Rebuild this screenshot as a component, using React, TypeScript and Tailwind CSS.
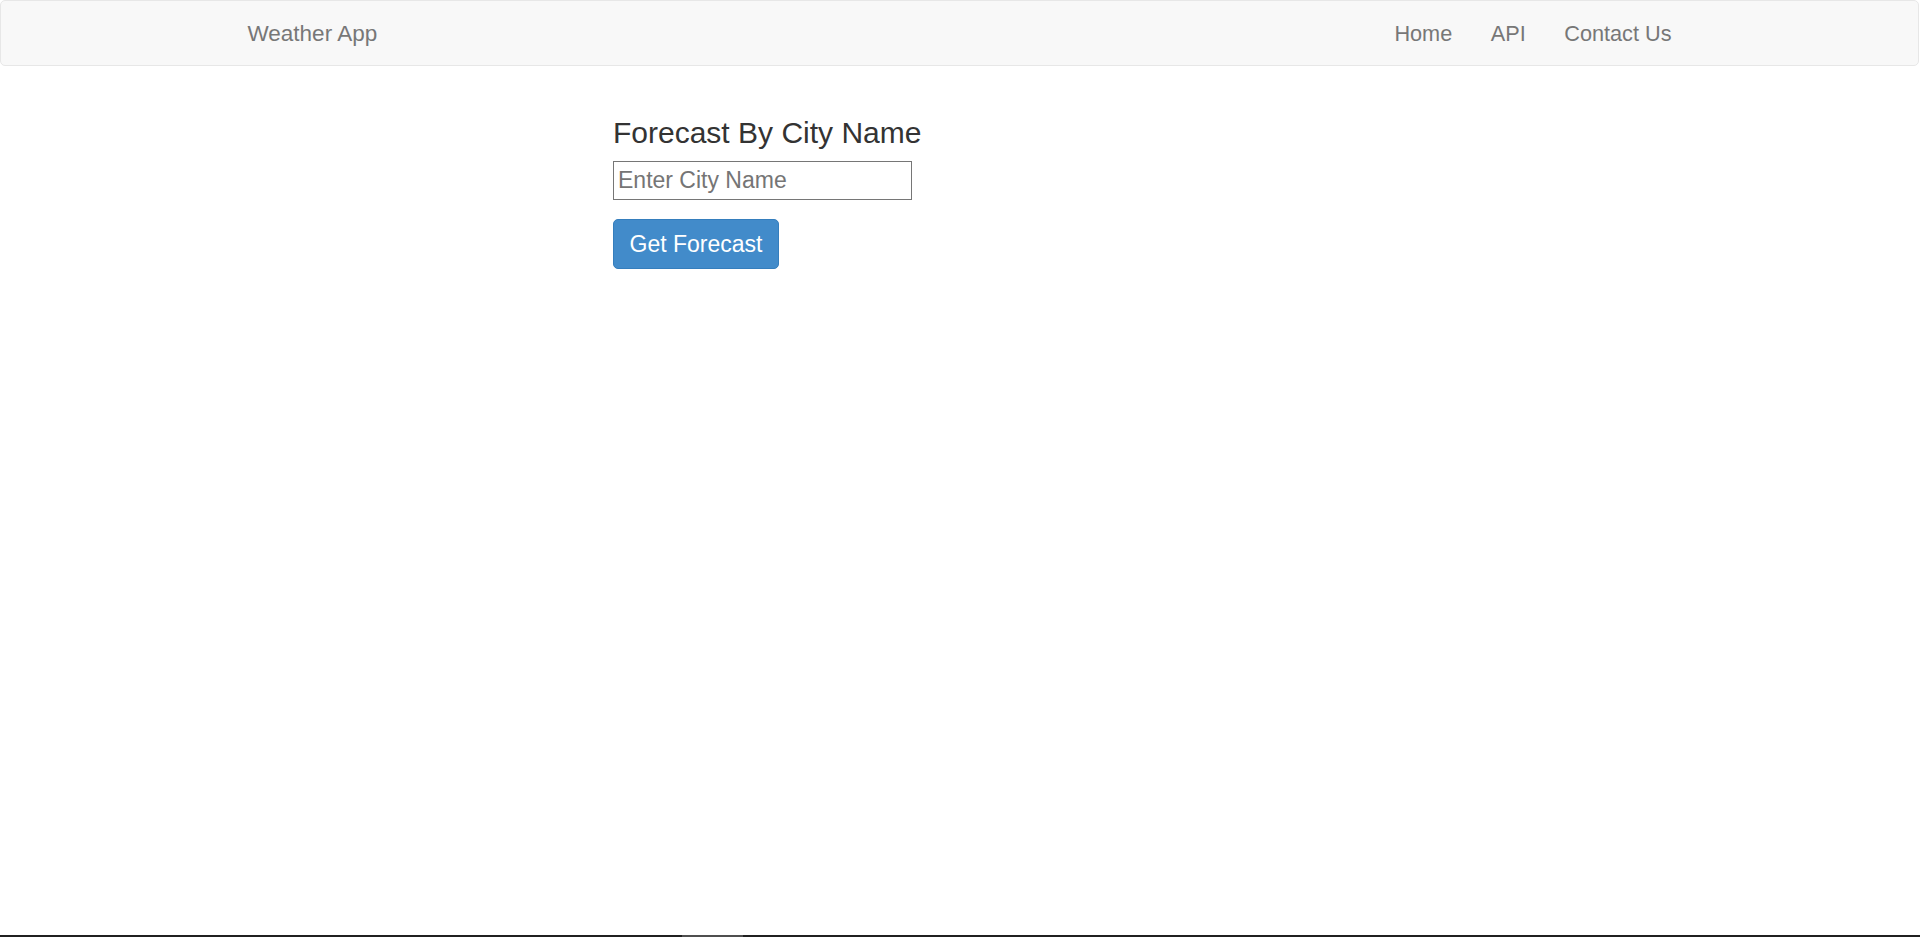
import React from "react";

export default function App() {
  return (
    <div
      className="flex min-h-[937px] flex-col bg-white"
      style={{ fontFamily: '"Liberation Sans", Arial, Helvetica, sans-serif' }}
    >
      <nav className="mr-[1px] h-[66px] rounded-[5px] border border-[#e7e7e7] bg-[#f8f8f8]">
        <div className="mx-auto flex h-full w-[1462px] items-center justify-between pt-[2px]">
          <a className="ml-[19px] text-[22.5px] leading-none text-[#777777]">Weather App</a>
          <ul className="mr-[19px] flex items-center gap-[38.5px] text-[21.7px] leading-none text-[#777777]">
            <li>Home</li>
            <li>API</li>
            <li>Contact Us</li>
          </ul>
        </div>
      </nav>
      <main className="mx-auto w-[1462px]">
        <div className="ml-[384px] pt-[50px]">
          <h3 className="text-[30px] font-normal leading-[33px] text-[#333333]">Forecast By City Name</h3>
          <input
            type="text"
            placeholder="Enter City Name"
            className="mt-[12px] block h-[39px] w-[299px] border border-[#767676] px-[4px] text-[23px] text-[#333] outline-none placeholder:text-[#757575]"
            style={{ fontFamily: '"Liberation Sans", Arial, sans-serif' }}
          />
          <button
            className="mt-[19px] flex h-[50px] w-[166px] items-center justify-center rounded-[5px] border border-[#357ebd] bg-[#428bca] text-[23px] text-white"
          >
            Get Forecast
          </button>
        </div>
      </main>
      <div className="flex-1" />
      <div className="flex h-[2px] bg-[#202020]">
        <div className="ml-[682px] h-full w-[61px] bg-[#4f4f4f]" />
      </div>
    </div>
  );
}
